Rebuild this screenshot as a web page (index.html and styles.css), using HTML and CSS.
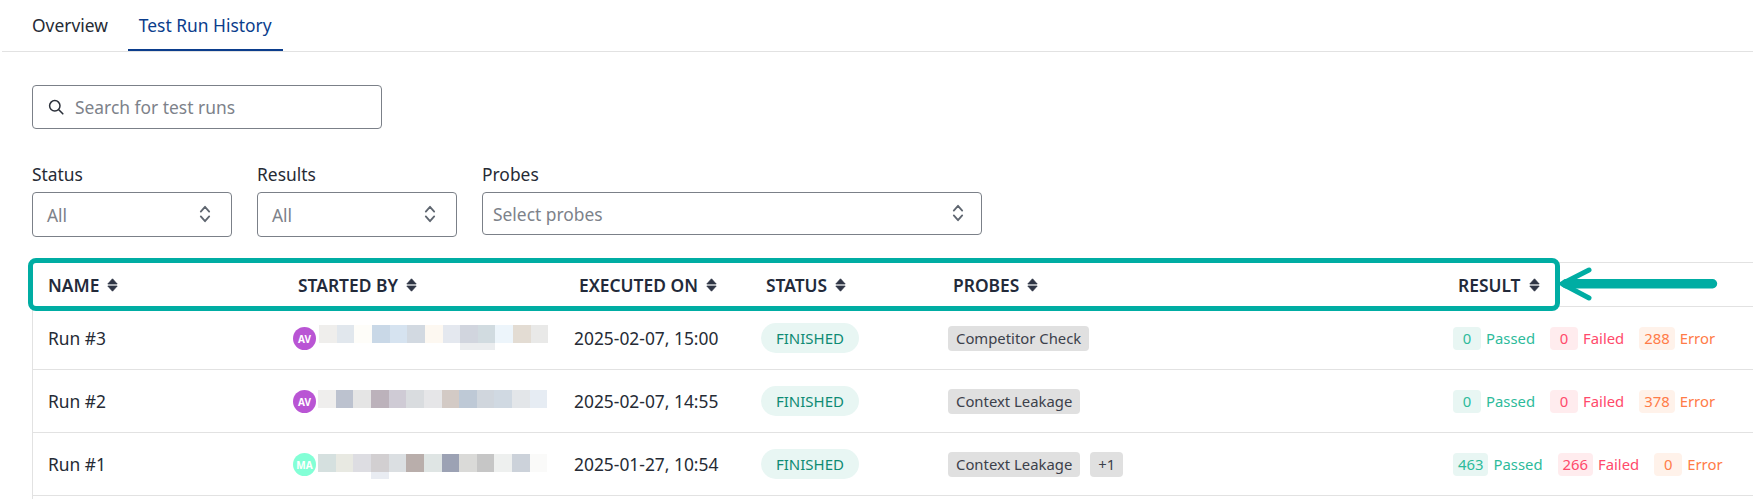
FILE: index.html
```html
<!DOCTYPE html>
<html lang="en">
<head>
<meta charset="utf-8">
<title>Test Run History</title>
<link rel="stylesheet" href="styles.css">
</head>
<body>
<svg class="defs" width="0" height="0" aria-hidden="true">
  <defs>
    <symbol id="sort" viewBox="0 0 11 14"><path d="M5.5 0.8 L10.2 6 H0.8 Z M0.8 8 H10.2 L5.5 13.2 Z" stroke-width="0.8" stroke-linejoin="round"/></symbol>
    <symbol id="updown" viewBox="0 0 12 18"><path d="M1.8 6.6 L6 1.8 L10.2 6.6 M1.8 11.4 L6 16.2 L10.2 11.4" fill="none" stroke="#5f6670" stroke-width="1.8" stroke-linecap="round" stroke-linejoin="round"/></symbol>
  </defs>
</svg>
<nav class="tabs">
  <a class="tab">Overview</a>
  <a class="tab tab-active">Test Run History</a>
</nav>
<main class="content">
  <div class="search">
    <svg class="search-icon" viewBox="0 0 16 16" width="16" height="16"><circle cx="6.8" cy="6.8" r="5.2" fill="none" stroke="#2b303a" stroke-width="1.5"/><path d="M10.8 10.8 L14.8 14.8" stroke="#2b303a" stroke-width="1.6" stroke-linecap="round"/></svg>
    <span class="placeholder">Search for test runs</span>
  </div>
  <div class="filters">
    <div class="filter">
      <label class="filter-label">Status</label>
      <div class="select select-small"><span class="placeholder">All</span><svg class="updown"><use href="#updown"/></svg></div>
    </div>
    <div class="filter">
      <label class="filter-label">Results</label>
      <div class="select select-small"><span class="placeholder">All</span><svg class="updown"><use href="#updown"/></svg></div>
    </div>
    <div class="filter">
      <label class="filter-label">Probes</label>
      <div class="select select-wide"><span class="placeholder">Select probes</span><svg class="updown"><use href="#updown"/></svg></div>
    </div>
  </div>
  <div class="table">
    <div class="row head">
      <div class="th c-name">NAME<svg class="sort"><use href="#sort"/></svg></div>
      <div class="th">STARTED BY<svg class="sort"><use href="#sort"/></svg></div>
      <div class="th">EXECUTED ON<svg class="sort"><use href="#sort"/></svg></div>
      <div class="th">STATUS<svg class="sort"><use href="#sort"/></svg></div>
      <div class="th">PROBES<svg class="sort"><use href="#sort"/></svg></div>
      <div class="th">RESULT<svg class="sort"><use href="#sort"/></svg></div>
    </div>
    <div class="row">
      <div class="td c-name">Run #3</div>
      <div class="td user">
        <span class="avatar av-purple">AV</span>
        <svg class="blur blur-r1" width="230" height="25" viewBox="0 0 230 25" shape-rendering="crispEdges"><rect x="0" y="0" width="18" height="18" fill="#efeeec"/><rect x="18" y="0" width="17" height="18" fill="#e1e7ed"/><rect x="35" y="0" width="18" height="18" fill="#fefdf9"/><rect x="53" y="0" width="18" height="18" fill="#c9d8e7"/><rect x="71" y="0" width="17" height="18" fill="#d6e3f0"/><rect x="88" y="0" width="18" height="18" fill="#d2d9e1"/><rect x="106" y="0" width="18" height="18" fill="#fdf8f1"/><rect x="124" y="0" width="17" height="18" fill="#e4e8ef"/><rect x="141" y="0" width="18" height="18" fill="#d1d5de"/><rect x="159" y="0" width="17" height="18" fill="#d1dbe0"/><rect x="176" y="0" width="18" height="18" fill="#edf5fb"/><rect x="194" y="0" width="18" height="18" fill="#e3dcd3"/><rect x="212" y="0" width="17" height="18" fill="#e9e9e8"/><rect x="141" y="18" width="35" height="7" fill="#ebedef"/></svg>
      </div>
      <div class="td">2025-02-07, 15:00</div>
      <div class="td"><span class="pill">FINISHED</span></div>
      <div class="td tags"><span class="tag">Competitor Check</span></div>
      <div class="td results">
        <span class="res pass"><b class="num">0</b>Passed</span>
        <span class="res fail"><b class="num">0</b>Failed</span>
        <span class="res err"><b class="num">288</b>Error</span>
      </div>
    </div>
    <div class="row">
      <div class="td c-name">Run #2</div>
      <div class="td user">
        <span class="avatar av-purple">AV</span>
        <svg class="blur blur-r2" width="230" height="25" viewBox="0 0 230 25" shape-rendering="crispEdges"><rect x="0" y="0" width="18" height="18" fill="#efeeed"/><rect x="18" y="0" width="17" height="18" fill="#bcc2cf"/><rect x="35" y="0" width="18" height="18" fill="#e5e5e5"/><rect x="53" y="0" width="18" height="18" fill="#bcb2bb"/><rect x="71" y="0" width="17" height="18" fill="#cfcbd5"/><rect x="88" y="0" width="18" height="18" fill="#d9dcdf"/><rect x="106" y="0" width="18" height="18" fill="#e6e6e8"/><rect x="124" y="0" width="17" height="18" fill="#d3cac5"/><rect x="141" y="0" width="18" height="18" fill="#bec9d6"/><rect x="159" y="0" width="17" height="18" fill="#d0d6dd"/><rect x="176" y="0" width="18" height="18" fill="#d0d9e2"/><rect x="194" y="0" width="18" height="18" fill="#e3e6e9"/><rect x="212" y="0" width="17" height="18" fill="#e6ecf3"/></svg>
      </div>
      <div class="td">2025-02-07, 14:55</div>
      <div class="td"><span class="pill">FINISHED</span></div>
      <div class="td tags"><span class="tag">Context Leakage</span></div>
      <div class="td results">
        <span class="res pass"><b class="num">0</b>Passed</span>
        <span class="res fail"><b class="num">0</b>Failed</span>
        <span class="res err"><b class="num">378</b>Error</span>
      </div>
    </div>
    <div class="row">
      <div class="td c-name">Run #1</div>
      <div class="td user">
        <span class="avatar av-mint">MA</span>
        <svg class="blur blur-r3" width="230" height="25" viewBox="0 0 230 25" shape-rendering="crispEdges"><rect x="0" y="0" width="18" height="18" fill="#d5e0df"/><rect x="18" y="0" width="17" height="18" fill="#e8e9e2"/><rect x="35" y="0" width="18" height="18" fill="#dddde2"/><rect x="53" y="0" width="18" height="18" fill="#d2cfd1"/><rect x="71" y="0" width="17" height="18" fill="#dbdfe2"/><rect x="88" y="0" width="18" height="18" fill="#b9aeab"/><rect x="106" y="0" width="18" height="18" fill="#dfe5e4"/><rect x="124" y="0" width="17" height="18" fill="#9ca2b4"/><rect x="141" y="0" width="18" height="18" fill="#dadad8"/><rect x="159" y="0" width="17" height="18" fill="#c6c6c6"/><rect x="176" y="0" width="18" height="18" fill="#eef0ef"/><rect x="194" y="0" width="18" height="18" fill="#ccd2da"/><rect x="212" y="0" width="17" height="18" fill="#fafaf9"/><rect x="53" y="18" width="18" height="7" fill="#e9ecf2"/></svg>
      </div>
      <div class="td">2025-01-27, 10:54</div>
      <div class="td"><span class="pill">FINISHED</span></div>
      <div class="td tags"><span class="tag">Context Leakage</span><span class="tag">+1</span></div>
      <div class="td results">
        <span class="res pass"><b class="num">463</b>Passed</span>
        <span class="res fail"><b class="num">266</b>Failed</span>
        <span class="res err"><b class="num">0</b>Error</span>
      </div>
    </div>
    <div class="tail"></div>
    <div class="highlight"></div>
    <svg class="arrow" width="166" height="44" viewBox="0 0 166 44"><path d="M10 21.7 H156.5" stroke="#00ada3" stroke-width="9.4" stroke-linecap="round" fill="none"/><path d="M33 8 L6 21.7 L33 36" stroke="#00ada3" stroke-width="5" stroke-linecap="round" stroke-linejoin="round" fill="none"/></svg>
  </div>
</main>
</body>
</html>
```
FILE: styles.css
```css
* { box-sizing: border-box; }
html, body { margin: 0; padding: 0; }
body {
  height: 499px;
  overflow: hidden;
  background: #fff;
  color: #262b35;
  font-family: "Noto Sans", sans-serif;
  font-size: 17.4px;
}
.defs { position: absolute; }

.tabs {
  display: flex;
  height: 52px;
  margin-left: 2px;
  padding-left: 20px;
  border-bottom: 1px solid #e2e2e2;
}
.tab {
  height: 51px;
  padding: 0 10px;
  line-height: 51px;
  font-size: 17.4px;
  color: #262b35;
}
.tab-active {
  margin-left: 10px;
  padding: 0 11px;
  color: #0b3d8c;
  border-bottom: 2px solid #0b3d8c;
}

.content { padding: 33px 0 0 32px; }

.search {
  display: flex;
  align-items: center;
  width: 350px;
  height: 44px;
  padding-left: 15px;
  gap: 11px;
  border: 1px solid #7b8088;
  border-radius: 4px;
}
.placeholder { color: #7d828a; font-size: 17.4px; }

.filters {
  display: flex;
  align-items: flex-start;
  gap: 25px;
  margin-top: 33px;
}
.filter { display: flex; flex-direction: column; }
.filter-label { height: 30px; line-height: 24px; font-size: 17.4px; color: #262b35; }
.select {
  display: flex;
  align-items: center;
  justify-content: space-between;
  border: 1px solid #7b8088;
  border-radius: 4px;
}
.select-small { width: 200px; height: 45px; padding: 0 20px 0 14px; }
.select-wide { width: 500px; height: 43px; padding: 0 17px 0 10px; }
.updown { width: 12px; height: 18px; margin-bottom: 1px; }

.table {
  position: relative;
  margin-top: 25px;
  border-top: 1px solid #e2e2e2;
  border-left: 1px solid #e2e2e2;
}
.row {
  display: grid;
  grid-template-columns: 260px 281px 187px 187px 505px 1fr;
  align-items: center;
  height: 63px;
  border-bottom: 1px solid #e2e2e2;
}
.row.head { height: 44px; }
.tail { height: 3px; }
.th {
  display: flex;
  align-items: center;
  gap: 8px;
  padding-left: 5px;
  font-size: 17.4px;
  font-weight: 600;
  color: #232a3a;
}
.th.c-name { padding-left: 15px; }
.sort { width: 11px; height: 14px; fill: #2f3545; stroke: #2f3545; }
.td { font-size: 17.4px; color: #262b35; }
.td.c-name { padding-left: 15px; }

.user { display: flex; align-items: flex-start; align-self: stretch; }
.avatar {
  flex: none;
  width: 23px;
  height: 23px;
  margin-top: 20px;
  border-radius: 50%;
  display: flex;
  align-items: center;
  justify-content: center;
  font-size: 10px;
  font-weight: 700;
  color: #fff;
}
.av-purple { background: #b955d4; }
.av-mint { background: #83ffd6; }
.blur { flex: none; }
.blur-r1 { margin: 18px 0 0 3px; }
.blur-r2 { margin: 20px 0 0 2px; }
.blur-r3 { margin: 21px 0 0 2px; }

.pill {
  display: block;
  width: 98px;
  height: 30px;
  line-height: 30px;
  text-align: center;
  border-radius: 15px;
  background: #e8f6f3;
  color: #0e8b74;
  font-size: 15px;
}
.tags { display: flex; align-items: center; gap: 10px; }
.tag {
  height: 25px;
  line-height: 25px;
  padding: 0 8px;
  border-radius: 4px;
  background: #e0e0e0;
  color: #3c414b;
  font-size: 14.85px;
}

.results { display: flex; gap: 15px; font-size: 14.85px; }
.res { display: flex; align-items: center; gap: 5px; }
.num {
  min-width: 28px;
  height: 23px;
  line-height: 23px;
  padding: 0 5px;
  text-align: center;
  border-radius: 4px;
  font-weight: 400;
}
.pass { color: #2dbb9b; }
.pass .num { background: #e8f6f3; }
.fail { color: #ff4a6b; }
.fail .num { background: #ffecee; }
.err { color: #ff7c48; }
.err .num { background: #fff2ea; }

.highlight {
  position: absolute;
  left: -5px;
  top: -5px;
  width: 1532px;
  height: 53px;
  border: 5px solid #00ada3;
  border-radius: 8px;
}
.arrow { position: absolute; left: 1523px; top: -1px; }
```
